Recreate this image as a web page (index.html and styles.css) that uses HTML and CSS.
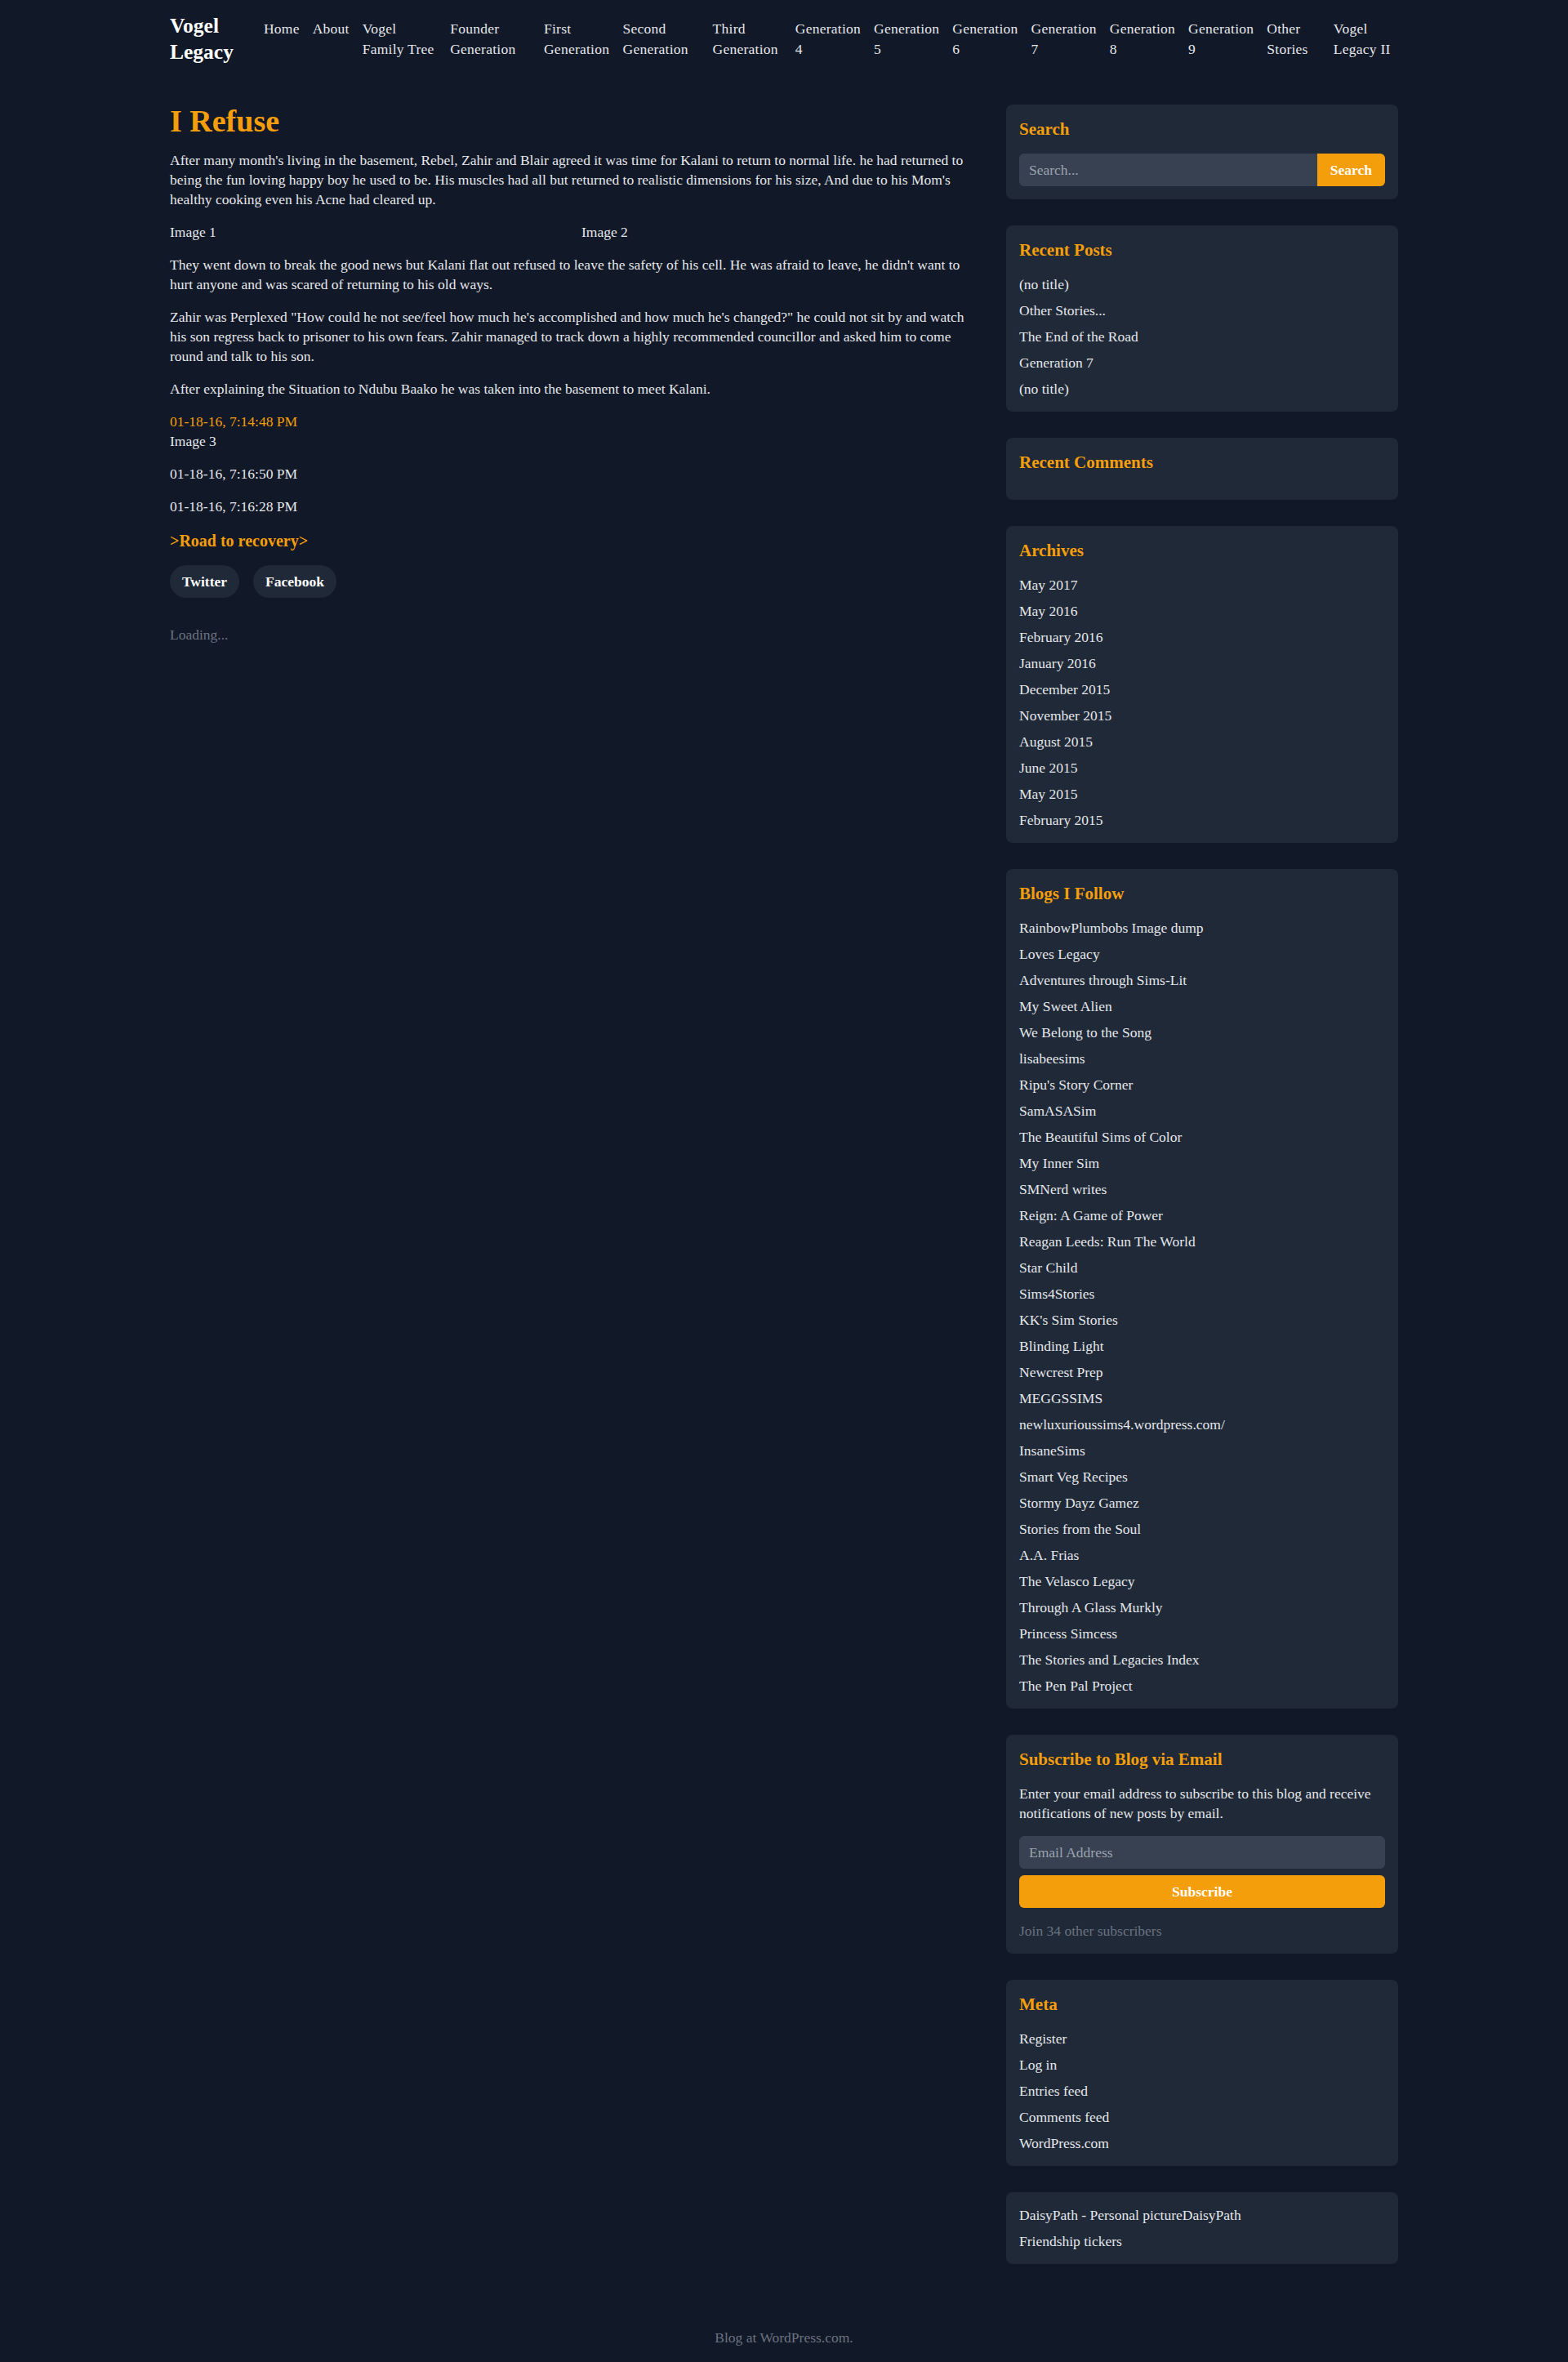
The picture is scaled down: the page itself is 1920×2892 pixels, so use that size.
FILE: index.html
```html
<!DOCTYPE html>
<html lang="en">
<head>
<meta charset="utf-8">
<title>I Refuse – Vogel Legacy</title>
<link rel="stylesheet" href="styles.css">
</head>
<body>
<header class="site-header">
  <div class="container header-inner">
    <a class="logo" href="#">Vogel Legacy</a>
    <nav class="main-nav">
      <ul class="nav-list">
        <li><a href="#">Home</a></li>
        <li><a href="#">About</a></li>
        <li><a href="#">Vogel Family Tree</a></li>
        <li><a href="#">Founder Generation</a></li>
        <li><a href="#">First Generation</a></li>
        <li><a href="#">Second Generation</a></li>
        <li><a href="#">Third Generation</a></li>
        <li><a href="#">Generation 4</a></li>
        <li><a href="#">Generation 5</a></li>
        <li><a href="#">Generation 6</a></li>
        <li><a href="#">Generation 7</a></li>
        <li><a href="#">Generation 8</a></li>
        <li><a href="#">Generation 9</a></li>
        <li><a href="#">Other Stories</a></li>
        <li><a href="#">Vogel Legacy II</a></li>
      </ul>
    </nav>
  </div>
</header>

<main class="container layout">
  <article class="post">
    <h1 class="post-title">I Refuse</h1>
    <p>After many month's living in the basement, Rebel, Zahir and Blair agreed it was time for Kalani to return to normal life. he had returned to being the fun loving happy boy he used to be. His muscles had all but returned to realistic dimensions for his size, And due to his Mom's healthy cooking even his Acne had cleared up.</p>
    <div class="image-row">
      <div>Image 1</div>
      <div>Image 2</div>
    </div>
    <p>They went down to break the good news but Kalani flat out refused to leave the safety of his cell. He was afraid to leave, he didn't want to hurt anyone and was scared of returning to his old ways.</p>
    <p>Zahir was Perplexed "How could he not see/feel how much he's accomplished and how much he's changed?" he could not sit by and watch his son regress back to prisoner to his own fears. Zahir managed to track down a highly recommended councillor and asked him to come round and talk to his son.</p>
    <p>After explaining the Situation to Ndubu Baako he was taken into the basement to meet Kalani.</p>
    <div class="figure">
      <div class="caption-accent">01-18-16, 7:14:48 PM</div>
      <div>Image 3</div>
    </div>
    <p>01-18-16, 7:16:50 PM</p>
    <p>01-18-16, 7:16:28 PM</p>
    <h3 class="post-link">&gt;Road to recovery&gt;</h3>
    <div class="share">
      <a class="pill" href="#">Twitter</a>
      <a class="pill" href="#">Facebook</a>
    </div>
    <div class="loading">Loading...</div>
  </article>

  <aside class="sidebar">
    <section class="widget">
      <h2 class="widget-title">Search</h2>
      <form class="search-form">
        <input class="search-input" type="text" placeholder="Search...">
        <button class="search-btn" type="button">Search</button>
      </form>
    </section>

    <section class="widget">
      <h2 class="widget-title">Recent Posts</h2>
      <ul class="widget-list">
        <li>(no title)</li>
        <li>Other Stories...</li>
        <li>The End of the Road</li>
        <li>Generation 7</li>
        <li>(no title)</li>
      </ul>
    </section>

    <section class="widget">
      <h2 class="widget-title">Recent Comments</h2>
      <ul class="widget-list"></ul>
    </section>

    <section class="widget">
      <h2 class="widget-title">Archives</h2>
      <ul class="widget-list">
        <li>May 2017</li>
        <li>May 2016</li>
        <li>February 2016</li>
        <li>January 2016</li>
        <li>December 2015</li>
        <li>November 2015</li>
        <li>August 2015</li>
        <li>June 2015</li>
        <li>May 2015</li>
        <li>February 2015</li>
      </ul>
    </section>

    <section class="widget">
      <h2 class="widget-title">Blogs I Follow</h2>
      <ul class="widget-list">
        <li>RainbowPlumbobs Image dump</li>
        <li>Loves Legacy</li>
        <li>Adventures through Sims-Lit</li>
        <li>My Sweet Alien</li>
        <li>We Belong to the Song</li>
        <li>lisabeesims</li>
        <li>Ripu's Story Corner</li>
        <li>SamASASim</li>
        <li>The Beautiful Sims of Color</li>
        <li>My Inner Sim</li>
        <li>SMNerd writes</li>
        <li>Reign: A Game of Power</li>
        <li>Reagan Leeds: Run The World</li>
        <li>Star Child</li>
        <li>Sims4Stories</li>
        <li>KK's Sim Stories</li>
        <li>Blinding Light</li>
        <li>Newcrest Prep</li>
        <li>MEGGSSIMS</li>
        <li>newluxurioussims4.wordpress.com/</li>
        <li>InsaneSims</li>
        <li>Smart Veg Recipes</li>
        <li>Stormy Dayz Gamez</li>
        <li>Stories from the Soul</li>
        <li>A.A. Frias</li>
        <li>The Velasco Legacy</li>
        <li>Through A Glass Murkly</li>
        <li>Princess Simcess</li>
        <li>The Stories and Legacies Index</li>
        <li>The Pen Pal Project</li>
      </ul>
    </section>

    <section class="widget">
      <h2 class="widget-title">Subscribe to Blog via Email</h2>
      <p class="widget-text">Enter your email address to subscribe to this blog and receive notifications of new posts by email.</p>
      <form class="subscribe-form">
        <input class="email-input" type="text" placeholder="Email Address">
        <button class="subscribe-btn" type="button">Subscribe</button>
      </form>
      <div class="muted join">Join 34 other subscribers</div>
    </section>

    <section class="widget">
      <h2 class="widget-title">Meta</h2>
      <ul class="widget-list">
        <li>Register</li>
        <li>Log in</li>
        <li>Entries feed</li>
        <li>Comments feed</li>
        <li>WordPress.com</li>
      </ul>
    </section>

    <section class="widget">
      <ul class="widget-list">
        <li>DaisyPath - Personal pictureDaisyPath</li>
        <li>Friendship tickers</li>
      </ul>
    </section>
  </aside>
</main>

<footer class="site-footer">
  <div class="container footer-inner">Blog at WordPress.com.</div>
</footer>
</body>
</html>
```

FILE: styles.css
```css
* {
  box-sizing: border-box;
}

html, body {
  margin: 0;
  padding: 0;
}

body {
  background: #111827;
  color: #e5e7eb;
  font-family: "Liberation Serif", "Times New Roman", serif;
  font-size: 17.5px;
  line-height: 24px;
}

a {
  color: inherit;
  text-decoration: none;
}

.container {
  max-width: 1536px;
  margin: 0 auto;
  padding: 0 16px;
}

/* Header */
.header-inner {
  display: flex;
  align-items: center;
  padding-top: 16px;
  padding-bottom: 16px;
}

.logo {
  flex: none;
  width: min-content;
  margin-right: 37px;
  color: #ffffff;
  font-weight: 700;
  font-size: 25.5px;
  line-height: 32px;
}

.main-nav {
  flex: 1 1 auto;
  min-width: 0;
}

.nav-list {
  list-style: none;
  margin: 0;
  padding: 0;
  display: flex;
  gap: 16px;
  letter-spacing: 0.25px;
}

.nav-list li {
  flex: 0 1 auto;
  line-height: 25px;
}

/* Layout */
.layout {
  display: grid;
  grid-template-columns: repeat(3, minmax(0, 1fr));
  column-gap: 32px;
  padding-top: 32px;
  padding-bottom: 46px;
  align-items: start;
}

.post {
  grid-column: span 2;
}

.post p {
  margin: 0 0 16px;
}

.post-title {
  margin: 0 0 16px;
  color: #f59e0b;
  font-size: 38px;
  line-height: 40px;
  font-weight: 700;
}

.image-row {
  display: grid;
  grid-template-columns: 1fr 1fr;
  gap: 16px;
  margin-bottom: 16px;
}

.figure {
  margin-bottom: 16px;
}

.caption-accent {
  color: #f59e0b;
}

.post-link {
  margin: 0 0 16px;
  color: #f59e0b;
  font-size: 20px;
  line-height: 28px;
  font-weight: 700;
}

.share {
  display: flex;
  gap: 17px;
}

.pill {
  display: inline-flex;
  align-items: center;
  height: 40px;
  padding: 0 15px;
  border-radius: 9999px;
  background: #1f2937;
  color: #ffffff;
  font-weight: 700;
}

.loading {
  margin-top: 33px;
  color: #6b7280;
}

/* Sidebar */
.sidebar {
  display: flex;
  flex-direction: column;
  gap: 32px;
}

.widget {
  background: #1f2937;
  border-radius: 8px;
  padding: 16px;
}

.widget-title {
  margin: 0 0 16px;
  color: #f59e0b;
  font-size: 21px;
  line-height: 28px;
  font-weight: 700;
}

.widget-list {
  list-style: none;
  margin: 0;
  padding: 0;
  display: flex;
  flex-direction: column;
  gap: 8px;
}

.search-form {
  display: flex;
  height: 40px;
}

.search-input,
.email-input {
  font-family: inherit;
  font-size: 17.5px;
  color: #e5e7eb;
  background: #374151;
  border: none;
  outline: none;
  padding: 0 12px;
  height: 40px;
}

.search-input::placeholder,
.email-input::placeholder {
  color: #9ca3af;
}

.search-input {
  flex: 1 1 auto;
  min-width: 0;
  border-radius: 6px 0 0 6px;
}

.search-btn {
  flex: none;
  height: 40px;
  padding: 0 16px;
  border: none;
  border-radius: 0 6px 6px 0;
  background: #f59e0b;
  color: #ffffff;
  font-family: inherit;
  font-size: 17.5px;
  font-weight: 700;
}

.widget-text {
  margin: 0 0 16px;
}

.subscribe-form {
  display: flex;
  flex-direction: column;
  gap: 8px;
}

.email-input {
  width: 100%;
  border-radius: 6px;
}

.subscribe-btn {
  width: 100%;
  height: 40px;
  border: none;
  border-radius: 6px;
  background: #f59e0b;
  color: #ffffff;
  font-family: inherit;
  font-size: 17.5px;
  font-weight: 700;
}

.muted {
  color: #6b7280;
}

.join {
  margin-top: 16px;
}

/* Footer */
.site-footer {
  padding: 32px 0 16px;
}

.footer-inner {
  text-align: center;
  color: #6b7280;
}
```
